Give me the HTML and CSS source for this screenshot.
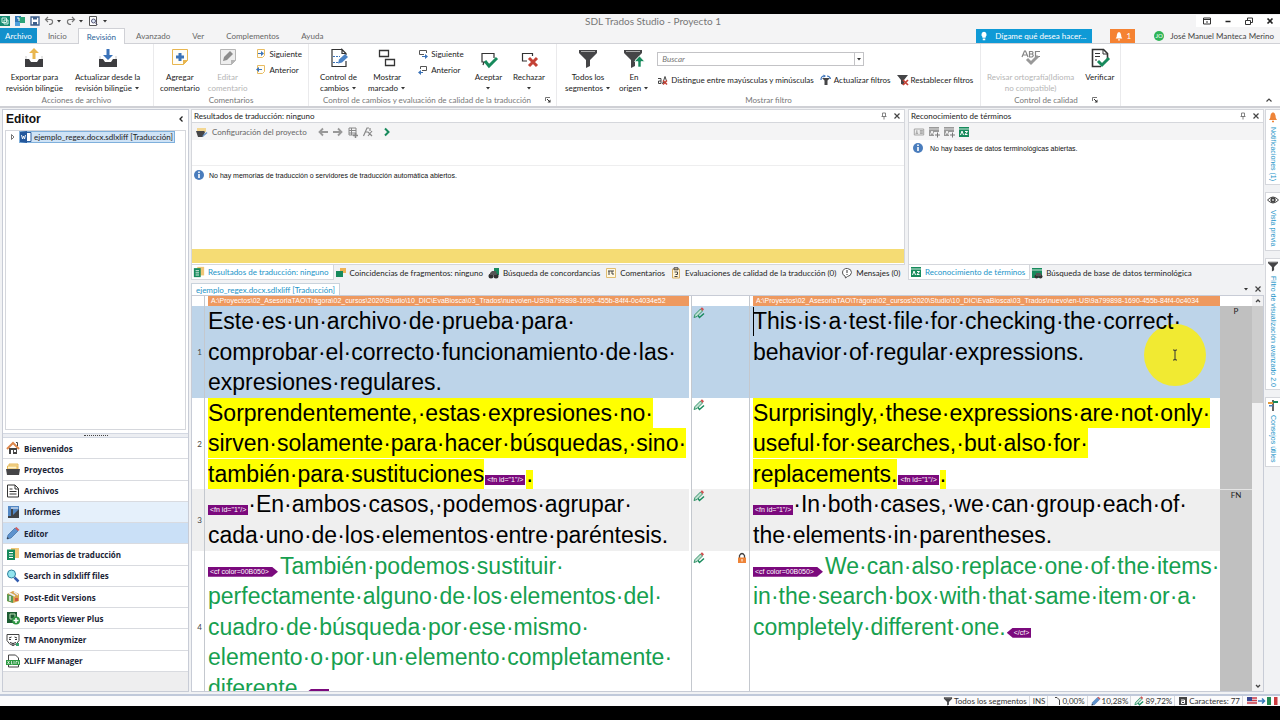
FILE: index.html
```html
<!DOCTYPE html>
<html lang="es">
<head>
<meta charset="utf-8">
<title>SDL Trados Studio - Proyecto 1</title>
<link rel="stylesheet" href="styles.css">
</head>
<body>
<svg class="sprite" aria-hidden="true">
<defs>
<symbol id="upload" viewBox="0 0 22 22"><path d="M2 12h4l2 3h6l2-3h4v8H2z" fill="#3d3d40"/><path d="M3 9v3M19 9v3" stroke="#c9c9c9"/><path d="M11 1l5 5h-3.500v6h-3V6H6z" fill="#e9b750"/></symbol>
<symbol id="download" viewBox="0 0 22 22"><path d="M2 12h4l2 3h6l2-3h4v8H2z" fill="#3d3d40"/><path d="M3 9v3M19 9v3" stroke="#c9c9c9"/><path d="M11 13l5-5h-3.500V2h-3v6H6z" fill="#3b73b9"/></symbol>
<symbol id="note-add" viewBox="0 0 22 22"><path d="M3.500 2.500h15v11l-4 4h-11z" fill="#fffdf6" stroke="#e8b650"/><path d="M14 18v-5h5z" fill="#e8b650"/><path d="M9.500 6h3v2.500H15v3h-2.500V14h-3v-2.500H7v-3h2.500z" fill="#3b73b9"/></symbol>
<symbol id="note-edit" viewBox="0 0 22 22"><path d="M3.500 2.500h15v11l-4 4h-11z" fill="#eee" stroke="#b5b5b5"/><path d="M14 18v-5h5z" fill="#b5b5b5"/><path d="M6 14l1-4 6-6 3 3-6 6z" fill="#8c8c8c"/></symbol>
<symbol id="note-next" viewBox="0 0 12 12"><path d="M2.500 1.500h7v6l-2 2h-5z" fill="#fffdf6" stroke="#e8bc62"/><path d="M3 5h3V3l3 2.500L6 8V6H3z" fill="#3b73b9"/></symbol>
<symbol id="note-prev" viewBox="0 0 12 12"><path d="M2.500 1.500h7v6l-2 2h-5z" fill="#fffdf6" stroke="#e8bc62"/><path d="M7 5H4V3L1 5.500 4 8V6h3z" fill="#3b73b9"/></symbol>
<symbol id="track" viewBox="0 0 22 22"><path d="M14 2.500H4v17h14V14M18 8V6.500L14 2.500v4h4" fill="none" stroke="#333" stroke-width="1.200"/><path d="M5 9.500h7M5 15.500h5" stroke="#3b73b9" stroke-dasharray="2 1"/><path d="M10 16.500l1-4 6-5.500 3 3-6 5.500z" fill="#4a82c4"/></symbol>
<symbol id="markup" viewBox="0 0 22 22"><g fill="none" stroke="#333" stroke-width="1.300"><path d="M3.500 3.500h9v6h-9zM9.500 12.500h9v6h-9z"/></g></symbol>
<symbol id="box-next" viewBox="0 0 12 12"><path d="M7 6.500H2.500v-4h7V5" fill="none" stroke="#555"/><path d="M5 8h3V6l3 2.500L8 11V9H5z" fill="#3b73b9"/></symbol>
<symbol id="box-prev" viewBox="0 0 12 12"><path d="M5 6.500h4.500v-4h-6V5" fill="none" stroke="#555"/><path d="M6 8H4V6L1 8.500 4 11V9h2z" fill="#3b73b9"/></symbol>
<symbol id="accept" viewBox="0 0 22 22"><path d="M8 15H5V6.500h12V11M7 15l-1 3" fill="none" stroke="#333" stroke-width="1.200"/><path d="M8 14l4 5 8-8" fill="none" stroke="#178a5c" stroke-width="3"/></symbol>
<symbol id="reject" viewBox="0 0 22 22"><path d="M9 14H4.500V6.500h10V9" fill="none" stroke="#333" stroke-width="1.200"/><path d="M11 11l8 8M19 11l-8 8" stroke="#c44236" stroke-width="3"/></symbol>
<symbol id="funnel" viewBox="0 0 22 22"><path d="M2 3h18v3l-7 7v6l-4 2v-8L2 6z" fill="#454547"/><path d="M4 4.500h14" stroke="#aaa"/></symbol>
<symbol id="funnel-up" viewBox="0 0 22 22"><path d="M1 3h18v3l-7 7v6l-4 2v-8L1 6z" fill="#454547"/><path d="M3 4.500h14" stroke="#aaa"/><path d="M16.500 9l5 5.500h-3.500V20h-3v-5.500h-3.500z" fill="#178a5c" stroke="#fff" stroke-width=".6"/></symbol>
<symbol id="funnel-refresh" viewBox="0 0 12 12"><path d="M2 4h8L7.500 6.500V11h-3V6.500z" fill="#454547"/><path d="M1 6q0-4 3-4M7 2q3 0 3.500 3" fill="none" stroke="#3b73b9" stroke-width="1.200"/><path d="M3.500.5L6 2 3.500 3.800z" fill="#3b73b9"/></symbol>
<symbol id="funnel-x" viewBox="0 0 12 12"><path d="M0 1h11L7 6v5L4 10V6z" fill="#454547"/><path d="M6 6l5 5M11 6l-5 5" stroke="#c44236" stroke-width="1.700"/></symbol>
<symbol id="case" viewBox="0 0 12 12"><path d="M1 4.500h3v5H1.500v-2.500H4M6 8.500h3M5.500 10L8 2.500 9.500 7" fill="none" stroke="#444"/><path d="M6 6.500l4 4M10 6.500l-4 4" stroke="#c44236" stroke-width="1.500"/></symbol>
<symbol id="spell" viewBox="0 0 22 22"><g fill="none" stroke="#858585" stroke-width="1.200"><path d="M2 10l2.500-6h1L8 10M3 8h4M9.500 4.500v5.500H12q2.500-1.500 0-3 2-1.500 0-2.500zM9.500 7H12M20 4.500h-4.500v5H20"/></g><path d="M7 12l4 4 7-7" fill="none" stroke="#999" stroke-width="3"/></symbol>
<symbol id="verify" viewBox="0 0 22 22"><path d="M12 19.500H3.500v-17h11l4 4V12" fill="none" stroke="#333" stroke-width="1.600"/><path d="M14 3v4h4M6 6.500h5M6 9.500h5M6 13h2" fill="none" stroke="#333"/><path d="M9 14l4 4 7-7" fill="none" stroke="#178a5c" stroke-width="3"/></symbol>
<symbol id="launcher" viewBox="0 0 8 8"><path d="M1.500 5V1.500H6" fill="none" stroke="#777"/><path d="M3 3l3 3" stroke="#333"/><path d="M6.500 3.500v3h-3z" fill="#333"/></symbol>
<symbol id="pencil" viewBox="0 0 14 14"><path d="M1 13l1-4 7-7 3 3-7 7z" fill="#5d92cd" stroke="#3e6ba3" stroke-width=".7"/><path d="M9 2l1.500-1 3 3L12 5z" fill="#d45b5b"/><path d="M1 13l.5-2 1.500 1.500z" fill="#333"/></symbol>
<symbol id="pencil-ok" viewBox="0 0 12 12"><path d="M1 10.500l1-3 5.500-5.500 2 2L4 9.500z" fill="#bfe0d0" stroke="#23895c" stroke-width=".9"/><path d="M7.500 1.500L9 .3l2 2L9.500 4z" fill="#cf5151"/><path d="M5 8.500l1.500 2L11 6.500" fill="none" stroke="#178a5c" stroke-width="1.500"/></symbol>
<symbol id="lock" viewBox="0 0 10 12"><path d="M2.500 6V3.500q2.500-4 5 0V6" fill="none" stroke="#444" stroke-width="1.300"/><path d="M1 5.500h8V11H1z" fill="#ee8438"/><path d="M5 7v2.500" stroke="#fff"/></symbol>
<symbol id="info" viewBox="0 0 12 12"><circle cx="6" cy="6" r="5" fill="#4a7dbd"/><path d="M6 5v4M6 2.500V4" stroke="#fff" stroke-width="1.600"/></symbol>
<symbol id="pin" viewBox="0 0 10 10"><path d="M3.500 2h3v3.500h-3zM2.500 5.500h5M5 6v2.500" fill="none" stroke="#777" stroke-width=".9"/></symbol>
<symbol id="close" viewBox="0 0 10 10"><path d="M2.500 2.500l5 5M7.500 2.500l-5 5" stroke="currentColor" stroke-width="1.200"/></symbol>
<symbol id="house" viewBox="0 0 14 14"><path d="M3 7h8v6H3z" fill="#444"/><path d="M5 9h2v4H5zM8 9h2v2H8z" fill="#fff"/><path d="M1 8l6-6 6 6" fill="none" stroke="#dd874c" stroke-width="2"/><path d="M10 1.500h1.500V5" stroke="#444" fill="none"/></symbol>
<symbol id="folder" viewBox="0 0 14 14"><path d="M3 2h9v5H3z" fill="#f7dda0" stroke="#e6b858"/><path d="M1.500 4H11v3H1.500z" fill="#fff3cc" stroke="#e6b858"/><path d="M0 7h14l-1 6H1z" fill="#454547"/></symbol>
<symbol id="file" viewBox="0 0 14 14"><path d="M1.500 1h7.500l3.500 3.500V13h-11z" fill="#fff" stroke="#333"/><path d="M9 1v4h3.500M3.500 5h3M3.500 7.500h7M3.500 10h7" fill="none" stroke="#333"/></symbol>
<symbol id="report" viewBox="0 0 14 14"><path d="M2 1h11v12H2z" fill="#3f4247"/><path d="M2 1h11v3L7 10V4H5v7H2z" fill="#5287c4"/><path d="M5 3h7" stroke="#fff"/></symbol>
<symbol id="memory" viewBox="0 0 14 14"><path d="M5 1h8v10H5z" fill="#f0c777"/><path d="M1 2.500h8V13H1z" fill="#178a5c"/><path d="M3 5.500h4M3 8h4M3 10.500h4" stroke="#fff"/></symbol>
<symbol id="search" viewBox="0 0 14 14"><circle cx="5.500" cy="5" r="4" fill="#93e5ef" stroke="#30829e"/><path d="M8.500 8.500l4 4" stroke="#315caf" stroke-width="2.500"/></symbol>
<symbol id="versions" viewBox="0 0 14 14"><path d="M1 4l6-3 6 3v7l-6 2-6-2z" fill="#d9a44f"/><path d="M1 4l6 2v7l-6-2z" fill="#5b9a55"/><path d="M3 3l6 3M8 2l4 3M4 6v5" stroke="#e8eef5" stroke-width="1.500"/><path d="M9 8h3v3H9z" fill="#cf5842"/></symbol>
<symbol id="report-plus" viewBox="0 0 14 14"><path d="M1 1h10v11H1z" fill="#1d5c33"/><path d="M4 3h5v5H4z" fill="none" stroke="#b8dfb5"/><circle cx="10" cy="9.500" r="4" fill="#2c9441"/><path d="M10 7v5M7.500 9.500h5" stroke="#fff" stroke-width="1.500"/></symbol>
<symbol id="mask" viewBox="0 0 14 14"><path d="M1 1.500h12v6q-2 4-6 5-4-1-6-5z" fill="#fff" stroke="#444"/><path d="M3 5l2.500-1M8.500 4L11 5M3 6.500h2M9 6.500h2M4 9.500q3 2 6 0M7 10v3" fill="none" stroke="#333"/><path d="M10 10h3v3h-3z" fill="#3aa370"/></symbol>
<symbol id="xliff" viewBox="0 0 14 14"><path d="M2.500 1h7l3 3v9h-10z" fill="#fff" stroke="#444"/><path d="M0 6h14v5H0z" fill="#2d9a42"/><path d="M1.500 7l2 3M3.500 7l-2 3M5.500 7v3h1M8 7v3M10 10V7.500h1.500M12.500 10V7.500" stroke="#fff" stroke-width=".7" fill="none"/></symbol>
<symbol id="word" viewBox="0 0 12 12"><path d="M7 1.500h4v9H7" fill="#fff" stroke="#2f5f9f"/><path d="M0 1l7-1v12l-7-1z" fill="#24589c"/><path d="M1.500 4l1 4 1-3 1 3 1-4" fill="none" stroke="#fff" stroke-width=".9"/></symbol>
<symbol id="termbase" viewBox="0 0 12 12"><path d="M1 1h10v10H1z" fill="#178a5c"/><path d="M1 3h10" stroke="#cfe8dc"/><path d="M2.500 9L4 5l1.500 4M7 5.500h2.500L7 8.500h2.500" fill="none" stroke="#fff"/></symbol>
<symbol id="termbase-off" viewBox="0 0 12 12"><path d="M1 1h10v9H1z" fill="#999"/><path d="M1 3h10" stroke="#ddd"/><path d="M2.500 8.500L4 5l1.500 3.500" fill="none" stroke="#fff"/><path d="M6 6h6v6H6z" fill="#f4f4f5"/><path d="M7 9h5M9.500 6.500v5" stroke="#777"/></symbol>
<symbol id="termbase-find" viewBox="0 0 12 12"><path d="M1 1h10v10H1z" fill="#178a5c"/><path d="M1 3h10" stroke="#cfe8dc"/><circle cx="5.500" cy="9.500" r="2" fill="#333"/><circle cx="9.500" cy="9.500" r="2" fill="#333"/><path d="M5 6h5v3H5z" fill="#555"/></symbol>
<symbol id="card" viewBox="0 0 14 12"><path d="M1.500 2.500h11v7h-11z" fill="#eee" stroke="#999"/><path d="M3 7.500h3M4.500 4v3M8 4.500h3.500M8 6h3.500M8 7.500h3.500" stroke="#888"/></symbol>
<symbol id="binoculars" viewBox="0 0 12 12"><path d="M6 1h5v7H6z" fill="#178a5c"/><circle cx="3" cy="9" r="2.500" fill="#333"/><circle cx="8" cy="9" r="2.500" fill="#333"/><path d="M2 6l2-2h4l1 4H2z" fill="#555"/></symbol>
<symbol id="fragment" viewBox="0 0 12 12"><path d="M5 1h6v5H5z" fill="#efb456"/><path d="M1 4h7v6H1z" fill="#178a5c"/></symbol>
<symbol id="comment" viewBox="0 0 12 12"><path d="M1.500 1.500h9v9h-9z" fill="#fff8e2" stroke="#e0bd70"/><path d="M3 4h6M4 4v4M7 4v3h2" fill="none" stroke="#444"/></symbol>
<symbol id="clipboard" viewBox="0 0 12 12"><path d="M2.500 2h7v9h-7z" fill="#fff4d8" stroke="#d9b063"/><path d="M4 .8h4v2H4zM4.500 5h3v2.500h-2M4.500 9.500h3" fill="none" stroke="#444"/></symbol>
<symbol id="message" viewBox="0 0 12 12"><path d="M4 9Q1 8 1.500 5q1-4 5-3.500 4 .5 4 4Q10 9 6.500 9.500L4.500 11z" fill="#fff" stroke="#555"/><path d="M6 3v3M6 7v1" stroke="#333"/></symbol>
<symbol id="bell" viewBox="0 0 10 12"><path d="M1 9q1.500-1 1.500-4.500Q3 1.500 5 1.200q2 .3 2.500 3.300Q7.500 8 9 9z" fill="currentColor"/><path d="M4 10.500h2" stroke="currentColor" stroke-width="1.500"/></symbol>
<symbol id="eye" viewBox="0 0 12 12"><path d="M.5 6Q6 0 11.500 6 6 12 .5 6z" fill="#fff" stroke="#444"/><circle cx="6" cy="6" r="2.700" fill="#444"/><circle cx="6" cy="6" r="1" fill="#ccc"/></symbol>
<symbol id="sign" viewBox="0 0 12 12"><path d="M6 1v11" stroke="#555" stroke-width="1.800"/><path d="M6 2h5v2H6z" fill="#178a5c"/><path d="M1 3h5v2H1z" fill="#e39a3f"/><path d="M2 6h4v1.500H2z" fill="#4a7dbd"/></symbol>
<symbol id="disk" viewBox="0 0 10 10"><path d="M1 1h8v8H1z" fill="#fff" stroke="#3c5e8a" stroke-width="1.300"/><path d="M3 1h4v2.500H3zM3 6h4v3H3z" fill="#3c5e8a"/></symbol>
<symbol id="app" viewBox="0 0 10 10"><path d="M0 0h10v10H0z" fill="#178a72"/><path d="M2 2h4.500v4.500H2zM4 4h4v4H4z" fill="none" stroke="#d3f0e4"/></symbol>
<symbol id="open" viewBox="0 0 12 12"><path d="M1 1h6v6H1z" fill="#2f75b6"/><path d="M5 2h6v6H5z" fill="#2ba278"/><path d="M1 7h5v4H1z" fill="#4fa0dc"/><path d="M3 3h2v3" stroke="#fff" fill="none"/></symbol>
<symbol id="undo" viewBox="0 0 10 10"><path d="M4 1L1.500 3.500 4 6M2 3.500h4q3 0 2.500 3Q8 8.500 5 8.500" fill="none" stroke="#777" stroke-width="1.200"/></symbol>
<symbol id="redo" viewBox="0 0 10 10"><path d="M6 1l2.500 2.500L6 6M8 3.500H4q-3 0-2.500 3Q2 8.500 5 8.500" fill="none" stroke="#777" stroke-width="1.200"/></symbol>
<symbol id="preview" viewBox="0 0 10 10"><path d="M1.500.5h7v9h-7z" fill="#fff" stroke="#555"/><circle cx="5.500" cy="5" r="2" fill="#dbe8f5" stroke="#557"/><path d="M7 6.500L9.500 9" stroke="#557"/></symbol>
<symbol id="caret" viewBox="0 0 6 6"><path d="M1 2h4L3 4.500z" fill="#333"/></symbol>
<symbol id="arrow-l" viewBox="0 0 12 12"><path d="M6 2.500L2.500 6 6 9.500M3 6h8" fill="none" stroke="#999" stroke-width="1.800"/></symbol>
<symbol id="arrow-r" viewBox="0 0 12 12"><path d="M6 2.500L9.500 6 6 9.500M9 6H1" fill="none" stroke="#999" stroke-width="1.800"/></symbol>
<symbol id="doc-plus" viewBox="0 0 12 12"><path d="M2 2h7v7H2zM2 4.500h7M2 7h7M4.500 2v7" fill="none" stroke="#888"/><path d="M6 9.500h5M8.500 7v5" stroke="#888" stroke-width="1.500"/></symbol>
<symbol id="fx" viewBox="0 0 12 12"><path d="M1.500 10L5 2h2M3 6h3M6 6l4 4M10 5l-4 5M8 2v3" fill="none" stroke="#888" stroke-width="1.200"/></symbol>
<symbol id="chev" viewBox="0 0 12 12"><path d="M4 2.500L7.500 6 4 9.500" fill="none" stroke="#178a5c" stroke-width="2"/></symbol>
<symbol id="project" viewBox="0 0 12 12"><path d="M1 2h9v4H1z" fill="#f3d793"/><path d="M0 5h8l1 1-2 5H2z" fill="#454547"/><path d="M6 11l1-2 3.500-3 1 1L8 10z" fill="#6a96cb"/></symbol>
<symbol id="bulb" viewBox="0 0 10 12"><path d="M5 1a3.500 3.500 0 0 1 2 6v1H3V7a3.500 3.500 0 0 1 2-6zM3.500 9h3v2h-3z" fill="#fff"/></symbol>
<symbol id="page" viewBox="0 0 10 10"><path d="M4 1.500h2L8.500 4v5" fill="none" stroke="#444"/></symbol>
<symbol id="chars" viewBox="0 0 10 10"><path d="M1 1h8v8H1z" fill="#444"/><path d="M3 4h3.500v3.500H3.500V5.500H6" fill="none" stroke="#fff"/></symbol>
<symbol id="flags" viewBox="0 0 34 10"><path d="M1 1h10v8H1z" fill="#e9eef3"/><path d="M1 2h10M1 4.500h10M1 7h10" stroke="#cb3b48" stroke-width="1.300"/><path d="M1 1h5v4H1z" fill="#37458f"/><path d="M12 5h6M16 2.500L18.500 5 16 7.500" fill="none" stroke="#3679ba" stroke-width="1.500"/><path d="M21 1h4v8h-4z" fill="#1f8a52"/><path d="M25 1h3v8h-3z" fill="#fff"/><path d="M28 1h3.500v8H28z" fill="#cb3b3f"/></symbol>
</defs>
</svg>

<div class="app">
  <header class="titlebar">
    <div class="quick">
      <svg class="i10"><use href="#app"/></svg><svg class="i12"><use href="#open"/></svg><svg class="i10"><use href="#disk"/></svg>
      <span class="pair"><svg class="i10"><use href="#undo"/></svg><svg class="i6"><use href="#caret"/></svg></span>
      <span class="pair"><svg class="i10"><use href="#redo"/></svg><svg class="i6"><use href="#caret"/></svg></span>
      <svg class="i10"><use href="#preview"/></svg><svg class="i6"><use href="#caret"/></svg>
    </div>
    <h1>SDL Trados Studio - Proyecto 1</h1>
    <div class="window-buttons">
      <button aria-label="Opciones de cinta"><svg viewBox="0 0 10 10"><path d="M1.500 2h7v6h-7zM1.500 3.500h7M5 7V5" fill="none" stroke="#333"/></svg></button>
      <button aria-label="Minimizar"><svg viewBox="0 0 10 10"><path d="M2.500 5.500h5" stroke="#222" stroke-width="1.500"/></svg></button>
      <button aria-label="Restaurar"><svg viewBox="0 0 10 10"><path d="M1.500 4.500h5v4h-5zM3.500 4V2h5v4.500H7" fill="none" stroke="#333"/></svg></button>
      <button aria-label="Cerrar"><svg viewBox="0 0 10 10"><path d="M2.500 2.500l5 5M7.500 2.500l-5 5" stroke="#222" stroke-width="1.700"/></svg></button>
    </div>
  </header>

  <nav class="tabs">
    <button class="tab file-tab">Archivo</button><button class="tab">Inicio</button><button class="tab current">Revisión</button><button class="tab">Avanzado</button><button class="tab">Ver</button><button class="tab">Complementos</button><button class="tab">Ayuda</button>
    <div class="account">
      <button class="tellme"><svg class="i10"><use href="#bulb"/></svg>Dígame qué desea hacer...</button>
      <button class="alerts"><svg class="i10"><use href="#bell"/></svg>1</button>
      <button class="user"><span class="avatar">JO</span>José Manuel Manteca Merino</button>
    </div>
  </nav>

  <section class="ribbon">
    <div class="group g-files">
      <div class="tools">
        <button class="big"><svg><use href="#upload"/></svg><span>Exportar para<br>revisión bilingüe</span></button>
        <button class="big"><svg><use href="#download"/></svg><span>Actualizar desde la<br>revisión bilingüe <svg class="i6"><use href="#caret"/></svg></span></button>
      </div>
      <h2>Acciones de archivo</h2>
    </div>
    <div class="group g-comments">
      <div class="tools">
        <button class="big"><svg><use href="#note-add"/></svg><span>Agregar<br>comentario</span></button>
        <button class="big" disabled><svg><use href="#note-edit"/></svg><span>Editar<br>comentario</span></button>
        <div class="stack">
          <button class="small"><svg class="i12"><use href="#note-next"/></svg>Siguiente</button>
          <button class="small"><svg class="i12"><use href="#note-prev"/></svg>Anterior</button>
        </div>
      </div>
      <h2>Comentarios</h2>
    </div>
    <div class="group g-track">
      <div class="tools">
        <button class="big"><svg><use href="#track"/></svg><span>Control de<br>cambios <svg class="i6"><use href="#caret"/></svg></span></button>
        <button class="big"><svg><use href="#markup"/></svg><span>Mostrar<br>marcado <svg class="i6"><use href="#caret"/></svg></span></button>
        <div class="stack">
          <button class="small"><svg class="i12"><use href="#box-next"/></svg>Siguiente</button>
          <button class="small"><svg class="i12"><use href="#box-prev"/></svg>Anterior</button>
        </div>
        <button class="big"><svg><use href="#accept"/></svg><span>Aceptar<br><svg class="i6"><use href="#caret"/></svg></span></button>
        <button class="big"><svg><use href="#reject"/></svg><span>Rechazar<br><svg class="i6"><use href="#caret"/></svg></span></button>
      </div>
      <h2>Control de cambios y evaluación de calidad de la traducción <svg class="launch"><use href="#launcher"/></svg></h2>
    </div>
    <div class="group g-filter">
      <div class="tools">
        <button class="big"><svg><use href="#funnel"/></svg><span>Todos los<br>segmentos <svg class="i6"><use href="#caret"/></svg></span></button>
        <button class="big"><svg><use href="#funnel-up"/></svg><span>En<br>origen <svg class="i6"><use href="#caret"/></svg></span></button>
        <div class="filter">
          <div class="combo"><input type="text" placeholder="Buscar" aria-label="Buscar"><button aria-label="Historial"><svg class="i6"><use href="#caret"/></svg></button></div>
          <div class="filter-actions">
            <button class="small"><svg class="i12"><use href="#case"/></svg>Distingue entre mayúsculas y minúsculas</button>
            <button class="small"><svg class="i12"><use href="#funnel-refresh"/></svg>Actualizar filtros</button>
            <button class="small"><svg class="i12"><use href="#funnel-x"/></svg>Restablecer filtros</button>
          </div>
        </div>
      </div>
      <h2>Mostrar filtro</h2>
    </div>
    <div class="group g-quality">
      <div class="tools">
        <button class="big" disabled><svg><use href="#spell"/></svg><span>Revisar ortografía(Idioma<br>no compatible)</span></button>
        <button class="big"><svg><use href="#verify"/></svg><span>Verificar</span></button>
      </div>
      <h2>Control de calidad <svg class="launch"><use href="#launcher"/></svg></h2>
    </div>
    <button class="collapse" aria-label="Contraer la cinta"><svg viewBox="0 0 10 10"><path d="M2.500 6.500L5 4l2.500 2.500" fill="none" stroke="#444" stroke-width="1.200"/></svg></button>
  </section>

  <main class="workspace">
    <aside class="sidebar">
      <header class="side-head"><h2>Editor</h2><button aria-label="Contraer panel"><svg viewBox="0 0 10 10"><path d="M6.500 2.500L4 5l2.500 2.500" fill="none" stroke="#222" stroke-width="1.300"/></svg></button></header>
      <div class="tree">
        <svg class="twisty" viewBox="0 0 6 8"><path d="M1.500 1.500L4 4 1.500 6.500z" fill="none" stroke="#777"/></svg>
        <a class="doc" href="#doc"><svg class="i12"><use href="#word"/></svg>ejemplo_regex.docx.sdlxliff [Traducción]</a>
      </div>
      <div class="splitter"></div>
      <nav class="views">
        <a href="#"><svg><use href="#house"/></svg>Bienvenidos</a>
        <a href="#"><svg><use href="#folder"/></svg>Proyectos</a>
        <a href="#"><svg><use href="#file"/></svg>Archivos</a>
        <a href="#" class="hover"><svg><use href="#report"/></svg>Informes</a>
        <a href="#" class="selected"><svg><use href="#pencil"/></svg>Editor</a>
        <a href="#"><svg><use href="#memory"/></svg>Memorias de traducción</a>
        <a href="#"><svg><use href="#search"/></svg>Search in sdlxliff files</a>
        <a href="#"><svg><use href="#versions"/></svg>Post-Edit Versions</a>
        <a href="#"><svg><use href="#report-plus"/></svg>Reports Viewer Plus</a>
        <a href="#"><svg><use href="#mask"/></svg>TM Anonymizer</a>
        <a href="#"><svg><use href="#xliff"/></svg>XLIFF Manager</a>
      </nav>
      <div class="views-rest"></div>
    </aside>

    <div class="center">
      <div class="panels">
        <section class="pane pane-results">
          <header class="pane-head"><h3>Resultados de traducción: ninguno</h3><svg class="i10"><use href="#pin"/></svg><svg class="i10 x"><use href="#close"/></svg></header>
          <div class="pane-body">
            <div class="pane-tools"><button class="config"><svg class="i12"><use href="#project"/></svg>Configuración del proyecto</button><svg class="i12"><use href="#arrow-l"/></svg><svg class="i12"><use href="#arrow-r"/></svg><svg class="i12"><use href="#doc-plus"/></svg><svg class="i12"><use href="#fx"/></svg><svg class="i12 go"><use href="#chev"/></svg></div>
            <div class="lookup"></div>
            <p class="notice"><svg class="i12"><use href="#info"/></svg>No hay memorias de traducción o servidores de traducción automática abiertos.</p>
            <div class="yellow-strip"></div>
          </div>
          <div class="pane-tabs">
            <button class="on"><svg class="i12"><use href="#memory"/></svg>Resultados de traducción: ninguno</button>
            <button><svg class="i12"><use href="#fragment"/></svg>Coincidencias de fragmentos: ninguno</button>
            <button><svg class="i12"><use href="#binoculars"/></svg>Búsqueda de concordancias</button>
            <button><svg class="i12"><use href="#comment"/></svg>Comentarios</button>
            <button><svg class="i12"><use href="#clipboard"/></svg>Evaluaciones de calidad de la traducción (0)</button>
            <button><svg class="i12"><use href="#message"/></svg>Mensajes (0)</button>
          </div>
        </section>
        <section class="pane pane-terms">
          <header class="pane-head"><h3>Reconocimiento de términos</h3><svg class="i10"><use href="#pin"/></svg><svg class="i10 x"><use href="#close"/></svg></header>
          <div class="pane-body">
            <div class="pane-tools"><svg class="i12"><use href="#card"/></svg><svg class="i12"><use href="#termbase-off"/></svg><svg class="i12"><use href="#termbase-off"/></svg><svg class="i12"><use href="#termbase"/></svg></div>
            <p class="notice"><svg class="i12"><use href="#info"/></svg>No hay bases de datos terminológicas abiertas.</p>
          </div>
          <div class="pane-tabs">
            <button class="on"><svg class="i12"><use href="#termbase"/></svg>Reconocimiento de términos</button>
            <button><svg class="i12"><use href="#termbase-find"/></svg>Búsqueda de base de datos terminológica</button>
          </div>
        </section>
      </div>

      <div class="doc-tabs"><button>ejemplo_regex.docx.sdlxliff [Traducción]</button><svg class="i6"><use href="#caret"/></svg><svg class="i10 x"><use href="#close"/></svg></div>

      <div class="editor" id="doc">
        <div class="scroll">
          <table class="segments">
            <colgroup><col class="c-num"><col class="c-src"><col class="c-gap"><col class="c-state"><col class="c-tgt"><col class="c-type"></colgroup>
            <thead><tr><th class="num"></th><th class="txt"><div class="path">A:\Proyectos\02_AsesoriaTAO\Trágora\02_cursos\2020\Studio\10_DIC\EvaBiosca\03_Trados\nuevo\en-US\9a799898-1690-455b-84f4-0c4034e52</div></th><th class="gap"></th><th class="state"></th><th class="txt"><div class="path">A:\Proyectos\02_AsesoriaTAO\Trágora\02_cursos\2020\Studio\10_DIC\EvaBiosca\03_Trados\nuevo\en-US\9a799898-1690-455b-84f4-0c4034</div></th><th></th></tr></thead>
            <tbody>
            <tr class="active"><td class="num">1</td><td class="txt">Este·es·un·archivo·de·prueba·para·<br>comprobar·el·correcto·funcionamiento·de·las·<br>expresiones·regulares.</td><td class="gap"></td><td class="state"><svg class="i12"><use href="#pencil-ok"/></svg></td><td class="txt caret"><span class="pointer"><svg viewBox="0 0 8 12"><path d="M2 1h1.500L4 2l.5-1H6M4 2v8M2 11h1.500L4 10l.5 1H6" fill="none" stroke="#333"/></svg></span>This·is·a·test·file·for·checking·the·correct·<br>behavior·of·regular·expressions.</td><td class="type">P</td></tr>
            <tr><td class="num">2</td><td class="txt"><mark>Sorprendentemente,·estas·expresiones·no·<br>sirven·solamente·para·hacer·búsquedas,·sino·<br>también·para·sustituciones</mark><span class="tag">&lt;fn id="1"/&gt;</span><span class="stop">.</span></td><td class="gap"></td><td class="state"><svg class="i12"><use href="#pencil-ok"/></svg></td><td class="txt"><mark>Surprisingly,·these·expressions·are·not·only·<br>useful·for·searches,·but·also·for·<br>replacements.</mark><span class="tag">&lt;fn id="1"/&gt;</span><span class="stop">.</span></td><td class="type"></td></tr>
            <tr class="note"><td class="num">3</td><td class="txt"><span class="tag">&lt;fn id="1"/&gt;</span>·En·ambos·casos,·podemos·agrupar·<br>cada·uno·de·los·elementos·entre·paréntesis.</td><td class="gap"></td><td class="state"><svg class="i12"><use href="#pencil-ok"/></svg></td><td class="txt"><span class="tag">&lt;fn id="1"/&gt;</span>·In·both·cases,·we·can·group·each·of·<br>the·elements·in·parentheses.</td><td class="type first">FN</td></tr>
            <tr class="green"><td class="num">4</td><td class="txt"><span class="tag open">&lt;cf color=00B050&gt;</span>También·podemos·sustituir·<br>perfectamente·alguno·de·los·elementos·del·<br>cuadro·de·búsqueda·por·ese·mismo·<br>elemento·o·por·un·elemento·completamente·<br>diferente.<span class="tag shut">&lt;/cf&gt;</span></td><td class="gap"></td><td class="state"><div class="states"><svg class="i12"><use href="#pencil-ok"/></svg><svg class="i12"><use href="#lock"/></svg></div></td><td class="txt"><span class="tag open">&lt;cf color=00B050&gt;</span>We·can·also·replace·one·of·the·items·<br>in·the·search·box·with·that·same·item·or·a·<br>completely·different·one.<span class="tag shut">&lt;/cf&gt;</span></td><td class="type"></td></tr>
            </tbody>
          </table>
        </div>
        <div class="scrollbar"><svg viewBox="0 0 10 10"><path d="M3 6l2-2 2 2" fill="none" stroke="#444" stroke-width="1.300"/></svg><div class="thumb"></div><svg viewBox="0 0 10 10"><path d="M3 4l2 2 2-2" fill="none" stroke="#444" stroke-width="1.300"/></svg></div>
      </div>
    </div>

    <aside class="rail">
      <button class="r-notify"><svg class="i12"><use href="#bell"/></svg>Notificaciones (1)</button>
      <button class="r-view"><svg class="i12"><use href="#eye"/></svg>Vista previa</button>
      <button class="r-filter"><svg class="i12"><use href="#funnel"/></svg>Filtro de visualización avanzado 2.0</button>
      <button class="r-tips"><svg class="i12"><use href="#sign"/></svg>Consejos útiles</button>
    </aside>
  </main>

  <footer class="status">
    <span><svg class="i10"><use href="#funnel"/></svg>Todos los segmentos</span><span>INS</span><span><svg class="i10"><use href="#page"/></svg>0,00%</span><span><svg class="i10"><use href="#pencil"/></svg>10,28%</span><span><svg class="i10"><use href="#pencil-ok"/></svg>89,72%</span><span><svg class="i10"><use href="#chars"/></svg>Caracteres: 77</span><svg class="flags"><use href="#flags"/></svg>
  </footer>
</div>
</body>
</html>
```
FILE: styles.css
```css
* { box-sizing: border-box; }
body { margin: 0; background: #000; font: 8px Lato, "Open Sans", sans-serif; color: #222; }
h1, h2, h3, p { margin: 0; font-weight: 400; font-size: inherit; }
button { border: 0; padding: 0; margin: 0; background: none; color: inherit; font: inherit; white-space: nowrap; }
a { color: inherit; text-decoration: none; }
svg { flex: none; display: block; }
.sprite { position: absolute; width: 0; height: 0; }
.i6 { width: 6px; height: 6px; }
.i10 { width: 10px; height: 10px; }
.i12 { width: 12px; height: 12px; }

.app { height: 100vh; padding: 14px 0; display: flex; flex-direction: column; background: linear-gradient(#000 14px, #f1f2f4 14px calc(100% - 14px), #000 calc(100% - 14px)); overflow: hidden; }

/* Title bar and ribbon */
.titlebar { display: grid; grid-template-columns: 1fr auto 1fr; align-items: center; height: 14px; background: #f4f4f5; }
.titlebar h1 { font-size: 10px; line-height: 12px; color: #777; padding-left: 26px; }
.quick { display: flex; align-items: center; gap: 4px; }
.pair { display: flex; align-items: center; gap: 2px; }
.window-buttons { display: flex; justify-content: flex-end; }
.window-buttons button { width: 21px; height: 12px; display: grid; place-items: center; background: #fff; }
.window-buttons svg { width: 10px; height: 10px; }

.tabs { display: flex; align-items: stretch; height: 16px; background: #f4f4f5; border-bottom: 1px solid #d0d1d6; color: #666; }
.tab { padding: 0 11px; }
.file-tab { background: #1290cc; color: #fff; padding: 0 5px; }
.current { background: #fff; border: 1px solid #d0d1d6; border-bottom: 0; color: #2a6399; padding: 0 8px; margin-bottom: -1px; }
.account { margin-left: auto; display: flex; align-items: stretch; padding: 1px 6px 0 0; color: #444; }
.tellme, .alerts, .user { display: flex; align-items: center; }
.tellme { background: #0f9ad6; color: #fff; gap: 6px; padding: 0 5px 0 3px; margin-right: 18px; }
.alerts { background: #f58232; color: #fff; gap: 3px; padding: 0 4px; margin-right: 19px; }
.user { gap: 6px; }
.avatar { width: 10px; height: 10px; border-radius: 50%; background: #2fb457; color: #fff; font-size: 6px; line-height: 10px; }

.ribbon { display: flex; height: 64px; background: #fff; border-bottom: 2px solid #cfd0d5; }
.group { display: flex; flex-direction: column; border-right: 1px solid #eaeaec; flex: none; }
.tools { display: flex; flex: 1; }
.group h2 { height: 12px; line-height: 12px; text-align: center; color: #777; display: flex; justify-content: center; align-items: center; }
.launch { width: 8px; height: 8px; margin-left: 13px; }
.big { display: flex; flex-direction: column; align-items: center; padding-top: 3px; line-height: 11px; text-align: center; }
.big > svg { width: 22px; height: 22px; margin-bottom: 3px; }
.big span svg { display: inline-block; }
.big:disabled { color: #b5b5b5; }
.stack { display: flex; flex-direction: column; gap: 4px; padding-top: 4px; }
.small { display: flex; align-items: center; gap: 2px; height: 12px; }
.g-files { width: 154px; } .g-files .tools { gap: 12px; padding-left: 6px; }
.g-comments { width: 155px; } .g-comments .tools { gap: 8px; padding-left: 6px; }
.g-track { width: 248px; } .g-track .tools { gap: 11px; padding-left: 11px; }
.g-track h2 { padding-left: 10px; }
.g-filter { width: 424px; } .g-filter .tools { gap: 8px; padding-left: 8px; }
.g-quality { width: 140px; } .g-quality .tools { gap: 11px; padding-left: 6px; }
.g-quality h2 { padding-left: 12px; }
.filter { padding-top: 8px; display: flex; flex-direction: column; gap: 8px; }
.combo { display: flex; width: 207px; height: 14px; border: 1px solid #c3c3c6; }
.combo input { flex: 1; min-width: 0; border: 0; padding: 0 4px; font: italic 8px Lato, sans-serif; outline: 0; }
.combo input::placeholder { color: #777; }
.combo button { width: 9px; border-left: 1px solid #c3c3c6; display: grid; place-items: center; }
.filter-actions { display: flex; gap: 6px; }
.collapse { margin-left: auto; align-self: flex-end; padding: 0 6px 1px 0; }
.collapse svg { width: 10px; height: 10px; }

/* Navigation side panel */
.workspace { flex: 1; min-height: 0; display: flex; border-bottom: 2px solid #c0c9da; padding: 1px 0 2px 2px; }
.sidebar { width: 187px; flex: none; display: flex; flex-direction: column; border: 1px solid #c8ccd6; background: #fff; }
.side-head { display: flex; justify-content: space-between; align-items: center; height: 20px; padding: 0 2px 2px 3px; }
.side-head h2 { font: 700 12px "Liberation Sans", Arial, sans-serif; color: #111; }
.side-head svg { width: 10px; height: 10px; }
.tree { flex: 1; margin: 0 2px 3px; border: 1px solid #d5d7dc; padding: 0 4px; display: flex; align-items: flex-start; gap: 3px; }
.twisty { width: 6px; height: 8px; margin-top: 2px; }
.doc { display: flex; align-items: center; gap: 2px; height: 12px; padding: 0 1px 0 0; background: #cfe3f6; border: 1px solid #7fb0dc; white-space: nowrap; }
.splitter { height: 5px; display: grid; place-items: center; background: #eceef2; border-block: 1px solid #d3d8e2; }
.splitter::before { content: ""; width: 24px; border-top: 1px dotted #444; }
.views { display: grid; grid-auto-rows: 1fr; height: 234px; flex: none; font: 700 8px "Open Sans", "Noto Sans", sans-serif; color: #1b2436; }
.views a { display: flex; align-items: center; gap: 4px; padding-left: 3px; border-bottom: 1px solid #d9dbe0; }
.views svg { width: 14px; height: 14px; }
.views .hover { background: #e5f0fb; }
.views .selected { background: #cae0f7; }
.views-rest { height: 19px; background: #eeeeef; }

/* Docked panes */
.center { flex: 1; min-width: 0; display: flex; flex-direction: column; margin-left: 2px; }
.panels { display: grid; grid-template-columns: minmax(0, 714fr) minmax(0, 356fr); gap: 3px; height: 171px; flex: none; }
.pane { display: flex; flex-direction: column; min-width: 0; }
.pane-head { display: flex; align-items: center; gap: 3px; height: 14px; padding: 0 2px; background: #fff; border: 1px solid #d5d7dc; }
.pane-head h3 { flex: 1; }
.x { color: #444; }
.pane-body { flex: 1; display: flex; flex-direction: column; background: #fff; border: 1px solid #d5d7dc; border-top: 0; }
.pane-tools { display: flex; align-items: center; gap: 3px; height: 17px; padding: 0 4px; background: #f4f4f5; color: #666; }
.config { display: flex; align-items: center; gap: 4px; margin-right: 7px; }
.go { margin-left: 4px; }
.lookup { height: 26px; border-bottom: 1px solid #eeeeef; }
.notice { display: flex; align-items: center; gap: 4px; padding: 3px 1px; font: 7px "Liberation Sans", Arial, sans-serif; color: #111; }
.yellow-strip { height: 14px; margin-top: auto; margin-bottom: 1px; background: #f5dc74; }
.pane-terms .notice { gap: 6px; padding: 2px 3px; }
.pane-tabs { display: flex; height: 15px; }
.pane-tabs button { display: flex; align-items: center; gap: 3px; padding: 0 4px 0 1px; }
.pane-tabs .on { background: #fff; border: 1px solid #d5d7dc; border-top: 0; color: #2294c8; }

/* Segment editor */
.doc-tabs { display: flex; align-items: center; height: 15px; flex: none; padding: 3px 1px 0 0; gap: 4px; }
.doc-tabs button { margin-right: auto; align-self: stretch; padding: 0 4px; background: #fff; border: 1px solid #c9d3dc; border-bottom: 0; color: #2294c8; }
.editor { flex: 1; min-height: 0; display: flex; border: 1px solid #c8ccd6; background: #fff; }
.scroll { flex: 1; min-width: 0; overflow: hidden; }
.segments { width: 100%; table-layout: fixed; border-collapse: separate; border-spacing: 0; }
.c-num { width: 13px; } .c-gap { width: 3px; } .c-state { width: 58px; } .c-type { width: 32px; } .c-src { width: 484px; }
th, td { padding: 0; vertical-align: top; text-align: left; font-weight: 400; }
.num { border-right: 1px solid #c4c8ce; text-align: right; vertical-align: middle; padding-right: 2px; color: #444; }
.gap { background: #fff; border-right: 1px solid #c4c8ce; }
.state { border-right: 1px solid #c4c8ce; }
.txt { padding-left: 3px; white-space: nowrap; overflow: hidden; }
td.txt { font: 23px/1.33 "Liberation Sans", Arial, sans-serif; color: #000; }
.path { height: 10px; padding-left: 3px; font: 7px/10px "Liberation Sans", Arial, sans-serif; background: #ee995f; color: #fff; overflow: hidden; }
.active { background: #bdd4e9; }
.note { background: #efefef; }
.green td.txt { color: #16a04f; }
td.state { padding: 1px; }
.states { display: flex; justify-content: space-between; }
.type { background: #c0c0c0; text-align: center; line-height: 10px; }
.type.first { border-top: 1px solid #e4e4e4; }
mark { background: #ff0; color: inherit; padding: 2px 0; -webkit-box-decoration-break: clone; box-decoration-break: clone; }
.stop { padding: 2px 0; margin-left: 1px; background: linear-gradient(transparent 11px, #ff0 11px); }
.tag { display: inline-block; margin-left: 1px; padding: 0 2px; height: 10px; font-size: 7px; line-height: 10px; background: #7b0a7d; color: #fff; }
.txt > .tag:first-child { margin-left: 0; }
.open { padding-right: 9px; margin-right: 2px; clip-path: polygon(0 0, calc(100% - 6px) 0, 100% 50%, calc(100% - 6px) 100%, 0 100%); }
.shut { padding-left: 7px; clip-path: polygon(6px 0, 100% 0, 100% 100%, 6px 100%, 0 50%); }
.caret { position: relative; isolation: isolate; }
.caret::before { content: ""; position: absolute; left: 3px; top: 1px; width: 1px; height: 29px; background: #000; }
.pointer { position: absolute; z-index: -1; right: 14px; top: 18px; width: 62px; height: 62px; border-radius: 50%; background: #f1ea32; display: grid; place-items: center; }
.pointer svg { width: 8px; height: 12px; }
.scrollbar { width: 11px; flex: none; display: flex; flex-direction: column; align-items: center; background: #f1f1f2; }
.scrollbar svg { width: 10px; height: 10px; }
.thumb { width: 100%; height: 97px; background: #cdcdcd; margin-bottom: auto; }

/* Right rail */
.rail { width: 15px; flex: none; display: flex; flex-direction: column; gap: 7px; margin-left: 1px; font: 7px "Liberation Sans", Arial, sans-serif; }
.rail button { writing-mode: vertical-rl; display: flex; align-items: center; gap: 4px; padding: 1px 0 3px; background: #fff; border: 1px solid #d5d7dc; border-right: 0; color: #2294c8; }
.r-notify svg { color: #ee8438; }

.status { height: 10px; flex: none; display: flex; justify-content: flex-end; align-items: center; gap: 3px; background: #fbfbfc; color: #333; }
.status span { display: flex; align-items: center; gap: 1px; border-right: 1px solid #d5d7dc; padding-right: 2px; }
.flags { width: 34px; height: 10px; }
```
